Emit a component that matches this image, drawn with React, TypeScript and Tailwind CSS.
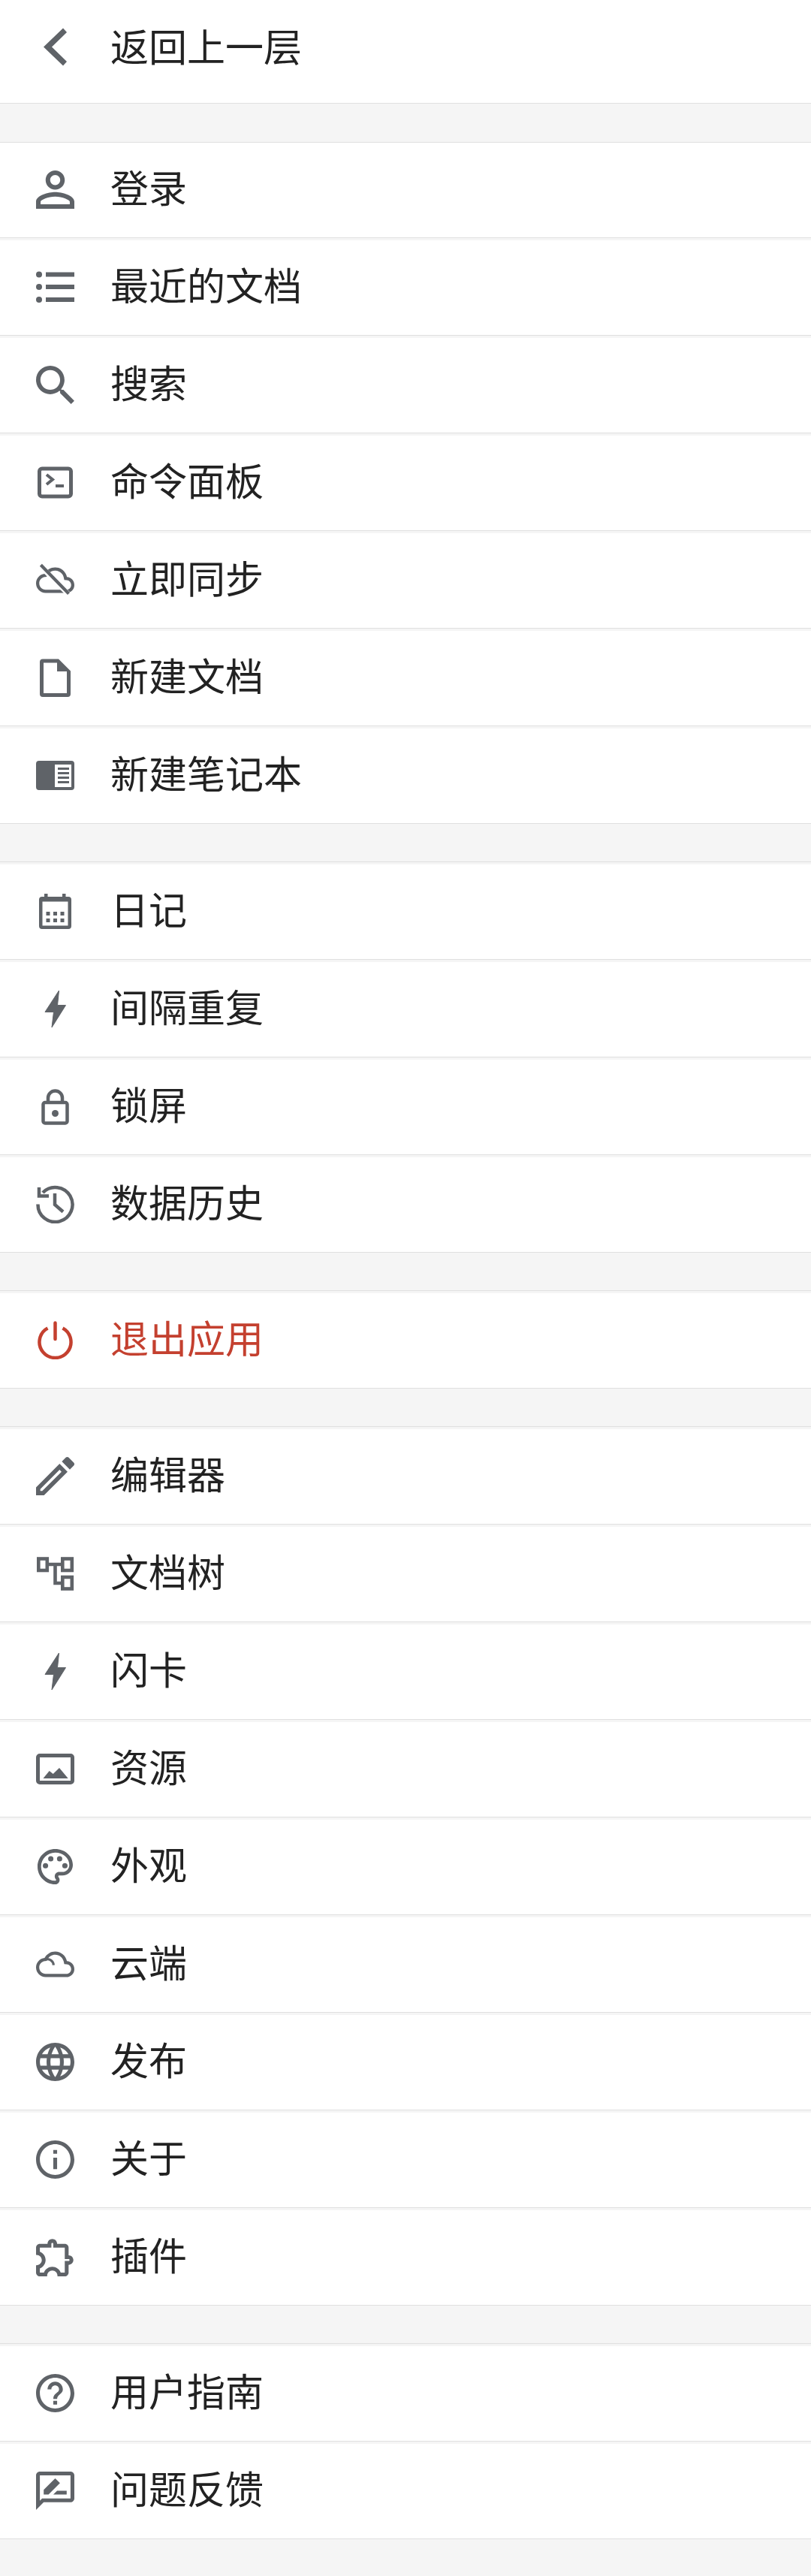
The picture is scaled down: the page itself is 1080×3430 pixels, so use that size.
import type { ReactNode } from "react";

type Item = { label: string; icon: ReactNode; danger?: boolean };

const flash = (
  <svg viewBox="0 0 51 51" className="size-full fill-current stroke-current" strokeWidth="1" strokeLinejoin="round">
    <path d="M30.5 1 L12 29.5 H23.5 L21 50 L39.5 20.5 H28.5 Z" />
  </svg>
);

const icon = (viewBox: string, d: string, extra?: ReactNode) => (
  <svg viewBox={viewBox} className="size-full fill-current">
    <path d={d} />
    {extra}
  </svg>
);

const account = icon(
  "4 4 16 16",
  "M12 5.9c1.16 0 2.1.94 2.1 2.1s-.94 2.1-2.1 2.1S9.9 9.16 9.9 8s.94-2.1 2.1-2.1m0 9c2.97 0 6.1 1.46 6.1 2.1v1.1H5.9V17c0-.64 3.13-2.1 6.1-2.1M12 4C9.79 4 8 5.79 8 8s1.79 4 4 4 4-1.79 4-4-1.79-4-4-4zm0 9c-2.67 0-8 1.34-8 4v3h16v-3c0-2.66-5.33-4-8-4z",
);

const list = (
  <svg viewBox="0 0 51 51" className="size-full fill-current">
    <circle cx="4" cy="8.5" r="4" />
    <circle cx="4" cy="25" r="4" />
    <circle cx="4" cy="42" r="4" />
    <rect x="13" y="5.5" width="38" height="6" />
    <rect x="13" y="22" width="38" height="6" />
    <rect x="13" y="39" width="38" height="6" />
  </svg>
);

const search = icon(
  "3 3 17.5 17.5",
  "M15.5 14h-.79l-.28-.27C15.41 12.59 16 11.11 16 9.5 16 5.91 13.09 3 9.5 3S3 5.91 3 9.5 5.91 16 9.5 16c1.61 0 3.09-.59 4.23-1.57l.27.28v.79l5 4.99L20.49 19l-4.99-5zm-6 0C7.01 14 5 11.99 5 9.5S7.01 5 9.5 5 14 7.01 14 9.5 11.99 14 9.5 14z",
);

const terminal = (
  <svg viewBox="0 0 51 51" className="size-full">
    <rect x="4.5" y="7" width="42" height="37" rx="3.5" fill="none" stroke="currentColor" strokeWidth="5" />
    <path d="M14 15 L22 21.5 L14 28" fill="none" stroke="currentColor" strokeWidth="4" />
    <rect x="26" y="28" width="11" height="4" fill="currentColor" />
  </svg>
);

const cloudPath =
  "M19.35 10.04C18.67 6.59 15.64 4 12 4 9.11 4 6.6 5.64 5.35 8.04 2.34 8.36 0 10.91 0 14c0 3.31 2.69 6 6 6h13c2.76 0 5-2.24 5-5 0-2.64-2.05-4.78-4.65-4.96zM19 18H6c-2.21 0-4-1.79-4-4 0-2.05 1.53-3.76 3.56-3.97l1.07-.11.5-.95C8.08 7.14 9.94 6 12 6c2.62 0 4.88 1.86 5.39 4.43l.3 1.5 1.53.11c1.56.1 2.78 1.41 2.78 2.96 0 1.65-1.35 3-3 3z";

const cloudOff = icon(
  "0 0 24 24",
  cloudPath,
  <>
    <path d="M2.5 3 L20.5 21" stroke="#fff" strokeWidth="3.2" />
    <path d="M3 2.5 L20.5 20.5" stroke="currentColor" strokeWidth="2" />
  </>,
);

const cloud = icon(
  "0 0 24 24",
  cloudPath,
  <path d="M5.5 9 C8.5 8.2 10.8 9.8 11 12.5" fill="none" stroke="currentColor" strokeWidth="1.5" />,
);

const file = (
  <svg viewBox="0 0 51 51" className="size-full fill-current">
    <path d="M9 .5h21l16 16V47a4 4 0 0 1-4 4H9a4 4 0 0 1-4-4V4.500a4 4 0 0 1 4-4zm1 5V46h31V17H28V5.500z" fillRule="evenodd" />
  </svg>
);

const notebook = (
  <svg viewBox="0 0 51 51" className="size-full fill-current">
    <path
      fillRule="evenodd"
      d="M4 6h43a4 4 0 0 1 4 4v31a4 4 0 0 1-4 4H4a4 4 0 0 1-4-4V10a4 4 0 0 1 4-4zm21 5v30h22V11zm4 4h15v3H29zm0 6h15v3H29zm0 6h15v3H29zm0 6h15v3H29z"
    />
  </svg>
);

const calendar = (
  <svg viewBox="0 0 51 51" className="size-full fill-current">
    <path
      fillRule="evenodd"
      d="M11 2h4.500v4h19.500V2H39.500v4H43a4 4 0 0 1 4 4v35a4 4 0 0 1-4 4H8a4 4 0 0 1-4-4V10a4 4 0 0 1 4-4h3zM8.500 12.500V44.500h34V12.500z"
    />
    <rect x="13.500" y="26" width="5" height="5" />
    <rect x="23" y="26" width="5" height="5" />
    <rect x="32.500" y="26" width="5" height="5" />
    <rect x="13.500" y="35" width="5" height="5" />
    <rect x="23" y="35" width="5" height="5" />
    <rect x="32.500" y="35" width="5" height="5" />
  </svg>
);

const lock = (
  <svg viewBox="0 0 51 51" className="size-full">
    <path d="M16 20v-6a9.500 9.500 0 0 1 19 0v6" fill="none" stroke="currentColor" strokeWidth="4.500" />
    <rect x="9.500" y="20" width="32" height="27.500" rx="2.500" fill="none" stroke="currentColor" strokeWidth="4.500" />
    <circle cx="25.500" cy="34.500" r="4.500" fill="currentColor" />
  </svg>
);

const history = (
  <svg viewBox="0 0 51 51" className="size-full" fill="none" stroke="currentColor" strokeWidth="4.500">
    <path d="M9 10 A23 23 0 1 1 2.500 25.500" />
    <path d="M4 3 V14.500 H17" />
    <path d="M25 11 V26 L36 35.500" />
  </svg>
);

const power = (
  <svg viewBox="0 0 51 51" className="size-full" fill="none" stroke="currentColor" strokeWidth="4.500">
    <path d="M15.500 9.500 A21 21 0 1 0 35.500 9.500" />
    <path d="M25.500 2.500 V24" strokeLinecap="round" />
  </svg>
);

const pencil = icon(
  "3 3 18 18",
  "M3 17.25V21h3.75L17.81 9.94l-3.75-3.75L3 17.25zM5.92 19H5v-.92l9.06-9.06.92.92L5.92 19zM20.71 5.63l-2.34-2.34c-.2-.2-.45-.29-.71-.29s-.51.1-.7.29l-1.83 1.83 3.75 3.75 1.83-1.83c.39-.39.39-1.02 0-1.41z",
);

const tree = (
  <svg viewBox="0 0 51 51" className="size-full" fill="none" stroke="currentColor" strokeWidth="4.600">
    <rect x="3.300" y="5.500" width="11.500" height="15.500" />
    <rect x="35.300" y="5.500" width="12.500" height="15.500" />
    <rect x="35.300" y="30" width="12.500" height="15.500" />
    <path d="M15 13 H35 M25.500 13 V38 H35" />
  </svg>
);

const image = (
  <svg viewBox="0 0 51 51" className="size-full">
    <rect x="2.500" y="7.500" width="46" height="36" rx="2.500" fill="none" stroke="currentColor" strokeWidth="5" />
    <path d="M9.500 38 L17.700 28 L22.700 32 L31 24 L42.700 38 Z" fill="currentColor" />
  </svg>
);

const palette = (
  <svg viewBox="1.150 1.150 21.700 21.700" className="size-full fill-current">
    <path d="M12 22C6.49 22 2 17.51 2 12S6.49 2 12 2s10 4.04 10 9c0 3.31-2.69 6-6 6h-1.77c-.28 0-.5.22-.5.5 0 .12.05.23.13.33.41.47.64 1.06.64 1.67 0 1.38-1.12 2.5-2.5 2.5zm0-18c-4.41 0-8 3.59-8 8s3.59 8 8 8c.28 0 .5-.22.5-.5 0-.16-.08-.28-.14-.35-.41-.46-.63-1.05-.63-1.65 0-1.38 1.12-2.5 2.5-2.5H16c2.21 0 4-1.79 4-4 0-3.86-3.59-7-8-7z" />
    <circle cx="6.5" cy="11.5" r="1.5" />
    <circle cx="9.5" cy="7.5" r="1.5" />
    <circle cx="14.5" cy="7.5" r="1.5" />
    <circle cx="17.5" cy="11.5" r="1.5" />
  </svg>
);

const globe = icon(
  "2 2 20 20",
  "M11.99 2C6.47 2 2 6.48 2 12s4.47 10 9.99 10C17.52 22 22 17.52 22 12S17.52 2 11.99 2zm6.93 6h-2.95c-.32-1.25-.78-2.45-1.38-3.56 1.84.63 3.37 1.91 4.33 3.56zM12 4.04c.83 1.2 1.48 2.53 1.91 3.96h-3.82c.43-1.43 1.08-2.76 1.91-3.96zM4.26 14C4.1 13.36 4 12.69 4 12s.1-1.36.26-2h3.38c-.08.66-.14 1.32-.14 2 0 .68.06 1.34.14 2H4.26zm.82 2h2.95c.32 1.25.78 2.45 1.38 3.56-1.84-.63-3.37-1.9-4.33-3.56zm2.95-8H5.08c.96-1.66 2.49-2.93 4.33-3.56C8.81 5.55 8.35 6.75 8.03 8zM12 19.96c-.83-1.2-1.48-2.53-1.91-3.96h3.82c-.43 1.43-1.08 2.76-1.91 3.96zM14.34 14H9.66c-.09-.66-.16-1.32-.16-2 0-.68.07-1.35.16-2h4.68c.09.65.16 1.32.16 2 0 .68-.07 1.34-.16 2zm.25 5.56c.6-1.11 1.06-2.31 1.38-3.56h2.95c-.96 1.65-2.49 2.93-4.33 3.56zM16.36 14c.08-.66.14-1.32.14-2 0-.68-.06-1.34-.14-2h3.38c.16.64.26 1.31.26 2s-.1 1.36-.26 2h-3.38z",
);

const info = icon(
  "2 2 20 20",
  "M11 7h2v2h-2zm0 4h2v6h-2zm1-9C6.48 2 2 6.48 2 12s4.48 10 10 10 10-4.48 10-10S17.52 2 12 2zm0 18c-4.41 0-8-3.59-8-8s3.59-8 8-8 8 3.59 8 8-3.59 8-8 8z",
);

const plugin = icon(
  "2 2 20 20",
  "M10.5 4.5c.28 0 .5.22.5.5v2h6v6h2c.28 0 .5.22.5.5s-.22.5-.5.5h-2v6h-2.12c-.68-1.75-2.39-3-4.38-3s-3.7 1.25-4.38 3H4v-2.12c1.75-.68 3-2.39 3-4.38 0-1.99-1.24-3.7-2.99-4.38L4 7h6V5c0-.28.22-.5.5-.5m0-2C9.12 2.5 8 3.62 8 5H4c-1.1 0-1.99.9-1.99 2v3.8h.29c1.49 0 2.7 1.21 2.7 2.7s-1.21 2.7-2.7 2.7H2V20c0 1.1.9 2 2 2h3.8v-.3c0-1.49 1.21-2.7 2.7-2.7s2.7 1.21 2.7 2.7v.3H17c1.1 0 2-.9 2-2v-4c1.38 0 2.5-1.12 2.5-2.5S20.38 11 19 11V7c0-1.1-.9-2-2-2h-4c0-1.38-1.12-2.5-2.5-2.5z",
);

const help = icon(
  "2 2 20 20",
  "M11 18h2v-2h-2v2zm1-16C6.48 2 2 6.48 2 12s4.48 10 10 10 10-4.48 10-10S17.52 2 12 2zm0 18c-4.41 0-8-3.59-8-8s3.59-8 8-8 8 3.59 8 8-3.59 8-8 8zm0-14c-2.21 0-4 1.79-4 4h2c0-1.1.9-2 2-2s2 .9 2 2c0 2-3 1.75-3 5h2c0-2.25 3-2.5 3-5 0-2.21-1.79-4-4-4z",
);

const feedback = icon(
  "2 2 20 20",
  "M20 2H4c-1.1 0-1.99.9-1.99 2L2 22l4-4h14c1.1 0 2-.9 2-2V4c0-1.1-.9-2-2-2zm0 14H5.17L4 17.17V4h16v12z",
  <path d="M6 14v-2.5l6-6 2.5 2.500-6 6zM11 14l2-2h5v2z" />,
);

const back = (
  <svg viewBox="0 0 51 51" className="size-full fill-current">
    <path d="M36 .5 L41 6 L21 25.5 L41 45 L36 50.500 L10 25.500 Z" />
  </svg>
);

const groups: Item[][] = [
  [
    { label: "登录", icon: account },
    { label: "最近的文档", icon: list },
    { label: "搜索", icon: search },
    { label: "命令面板", icon: terminal },
    { label: "立即同步", icon: cloudOff },
    { label: "新建文档", icon: file },
    { label: "新建笔记本", icon: notebook },
  ],
  [
    { label: "日记", icon: calendar },
    { label: "间隔重复", icon: flash },
    { label: "锁屏", icon: lock },
    { label: "数据历史", icon: history },
  ],
  [{ label: "退出应用", icon: power, danger: true }],
  [
    { label: "编辑器", icon: pencil },
    { label: "文档树", icon: tree },
    { label: "闪卡", icon: flash },
    { label: "资源", icon: image },
    { label: "外观", icon: palette },
    { label: "云端", icon: cloud },
    { label: "发布", icon: globe },
    { label: "关于", icon: info },
    { label: "插件", icon: plugin },
  ],
  [
    { label: "用户指南", icon: help },
    { label: "问题反馈", icon: feedback },
  ],
];

const Row = ({ item, last }: { item: Item; last: boolean }) => (
  <div
    className={`flex h-[127px] items-center border-b border-[#e0e0e0] bg-white pb-[2px] pl-12 ${last ? "" : "mb-[3px]"} ${
      item.danger ? "text-[#c4402f]" : "text-[#222222]"
    }`}
  >
    <span className={`size-[51px] shrink-0 ${item.danger ? "text-[#c4402f]" : "text-[#5f6368]"}`}>{item.icon}</span>
    <span className="ml-[48px] pb-2 text-[51px] leading-none">{item.label}</span>
  </div>
);

export default function App() {
  return (
    <div className="min-h-[3430px] bg-[#f5f5f5] font-['Noto_Sans_CJK_SC','Noto_Sans',sans-serif]">
      <div className="flex h-[138px] items-center border-b border-[#e0e0e0] bg-white pb-3 pl-12 text-[#222222]">
        <span className="size-[51px] shrink-0 text-[#5f6368]">{back}</span>
        <span className="ml-[48px] pb-1 text-[51px] leading-none">返回上一层</span>
      </div>
      {groups.map((group, i) => (
        <div key={i} className={`border-t border-[#e0e0e0] ${i === 0 ? "mt-[51px]" : "mt-[50px] pt-[3px]"}`}>
          {group.map((item, j) => (
            <Row key={item.label} item={item} last={j === group.length - 1} />
          ))}
        </div>
      ))}
    </div>
  );
}
